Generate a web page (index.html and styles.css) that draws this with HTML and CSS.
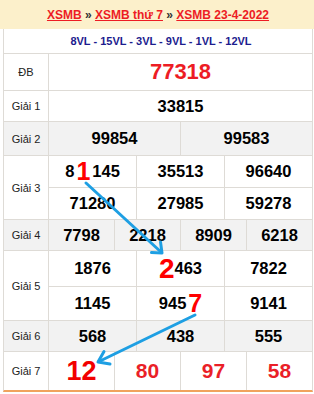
FILE: index.html
```html
<!DOCTYPE html>
<html lang="vi">
<head>
<meta charset="utf-8">
<title>XSMB 23-4-2022</title>
<link rel="stylesheet" href="styles.css">
</head>
<body>
<div class="page">
  <div class="head">
    <a href="#">XSMB</a> » <a href="#">XSMB thứ 7</a> » <a href="#">XSMB 23-4-2022</a>
  </div>
  <div class="board">
    <div class="vl">8VL - 15VL - 3VL - 9VL - 1VL - 12VL</div>

    <div class="lbl">ĐB</div>
    <div class="num s12 db">77318</div>

    <div class="lbl">Giải 1</div>
    <div class="num s12">33815</div>

    <div class="lbl alt">Giải 2</div>
    <div class="num s6 alt">99854</div>
    <div class="num s6 alt">99583</div>

    <div class="lbl r2">Giải 3</div>
    <div class="num s4">8<span class="big b1">1</span>145</div>
    <div class="num s4">35513</div>
    <div class="num s4">96640</div>
    <div class="num s4">71280</div>
    <div class="num s4">27985</div>
    <div class="num s4">59278</div>

    <div class="lbl alt">Giải 4</div>
    <div class="num s3 alt">7798</div>
    <div class="num s3 alt">2218</div>
    <div class="num s3 alt">8909</div>
    <div class="num s3 alt">6218</div>

    <div class="lbl r2">Giải 5</div>
    <div class="num s4">1876</div>
    <div class="num s4"><span class="big b2">2</span>463</div>
    <div class="num s4">7822</div>
    <div class="num s4">1145</div>
    <div class="num s4">945<span class="big b7">7</span></div>
    <div class="num s4">9141</div>

    <div class="lbl alt">Giải 6</div>
    <div class="num s4 alt">568</div>
    <div class="num s4 alt">438</div>
    <div class="num s4 alt">555</div>

    <div class="lbl">Giải 7</div>
    <div class="num s3 g7"><span class="big b12">12</span></div>
    <div class="num s3 g7">80</div>
    <div class="num s3 g7">97</div>
    <div class="num s3 g7">58</div>
  </div>

  <svg class="arrows" width="314" height="394" viewBox="0 0 314 394" aria-hidden="true">
    <g fill="none" stroke="#1e9fe3" stroke-width="3" stroke-linecap="round" stroke-linejoin="round">
      <line x1="86" y1="183" x2="161" y2="252"/>
      <polyline points="160.5,242 162,253 151.5,252.5"/>
      <line x1="195" y1="315" x2="99" y2="361.5"/>
      <polyline points="104,351.5 98,362 110,364"/>
    </g>
  </svg>
</div>
</body>
</html>
```

FILE: styles.css
```css
html, body {
  margin: 0;
  padding: 0;
  background: #fff;
}

.page {
  position: relative;
  width: 314px;
  height: 394px;
  font-family: "Liberation Sans", Arial, sans-serif;
  border-bottom: 0;
}

.head {
  height: 29px;
  background: #fcf0cb;
  display: flex;
  align-items: center;
  justify-content: center;
  font-size: 12px;
  font-weight: bold;
  color: #333;
  white-space: pre;
  padding-left: 2px;
}

.head a {
  color: #ed1c24;
  text-decoration: underline;
}

.board {
  margin-left: 3px;
  width: 308px;
  display: grid;
  grid-template-columns: 44px repeat(12, 1fr);
  grid-template-rows: 24px 36px 30px 33px 31px 31px 30px 35px 33px 30px 38px;
  gap: 1px;
  background: #dedbd6;
  border-left: 1px solid #dedbd6;
  border-right: 1px solid #dedbd6;
  border-bottom: 2px solid #f0a35e;
  margin-bottom: 0;
}

.vl {
  grid-column: 1 / -1;
  background: #fff;
  display: flex;
  align-items: center;
  justify-content: center;
  padding-left: 6px;
  font-size: 11px;
  font-weight: bold;
  color: #1c1c8e;
}

.lbl {
  grid-column: 1;
  background: #fff;
  display: flex;
  align-items: center;
  justify-content: center;
  font-size: 11px;
  color: #222;
}

.r2 {
  grid-row: span 2;
}

.num {
  background: #fff;
  display: flex;
  align-items: center;
  justify-content: center;
  font-size: 16.5px;
  font-weight: bold;
  color: #000;
  white-space: pre;
}

.alt {
  background: #f2f2f2;
}

.s12 { grid-column: span 12; }
.s6 { grid-column: span 6; }
.s4 { grid-column: span 4; }
.s3 { grid-column: span 3; }

.db {
  font-size: 22px;
  color: #ed1c24;
}

.g7 {
  font-size: 21px;
  color: #ea1f28;
}

.big {
  color: #ff0000;
  line-height: 1;
}

.b1 { font-size: 25px; margin: 0 2px; }
.b2 { font-size: 28px; }
.b7 { font-size: 25px; margin-left: 2px; }
.b12 { font-size: 27px; color: #f20000; }

.arrows {
  position: absolute;
  left: 0;
  top: 0;
  pointer-events: none;
}
```
